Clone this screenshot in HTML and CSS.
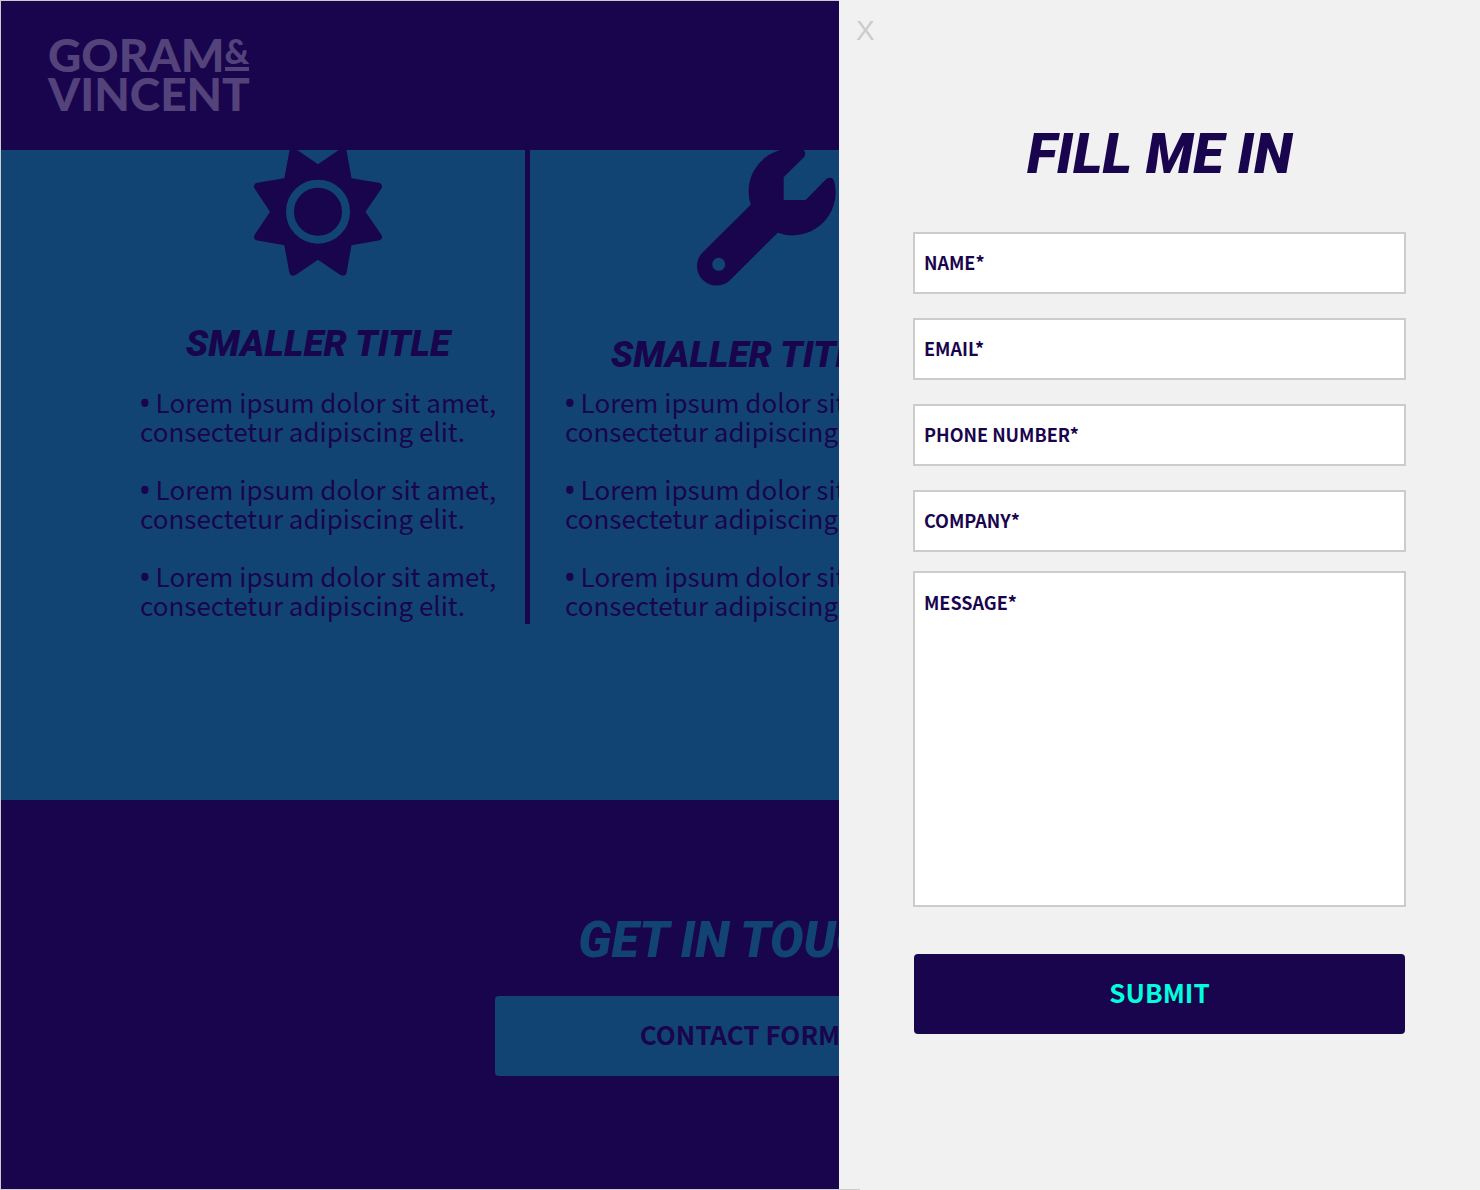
FILE: index.html
```html
<!DOCTYPE html>
<html lang="en">
<head>
  <meta charset="utf-8">
  <meta name="viewport" content="width=device-width, initial-scale=1">
  <title>Goram &amp; Vincent</title>
  <link rel="stylesheet" href="styles.css">
</head>
<body>
  <div class="page">
    <header class="header">
      <a class="logo" href="#">
        <span class="logo-line">GORAM<span class="logo-amp">&amp;</span></span>
        <span class="logo-line">VINCENT</span>
      </a>
    </header>

    <section class="features">
      <div class="feature-grid">
        <article class="feature">
          <svg class="icon" width="128" height="126" viewBox="0 0 128 126" aria-hidden="true">
            <path d="M64 14.3 42-.8Q36.500-4.500 35.300 1.500L30.300 28.300 3.300 32.800Q-1.500 34.300.700 38.700L16 61.700.700 84.700Q-1.500 89.200 3.300 90.600L30.300 95.300 35.300 122.300Q36.500 127.600 42 124.700L64 109.700 86 124.700Q91.500 127.600 92.700 122.300L97.500 95.300 124.700 90.600Q129.500 89.200 127.300 84.700L111.500 61.700 127.300 38.700Q129.500 34.300 124.700 32.800L97.500 28.300 92.700 1.500Q91.500-4.500 86-.8Z"/>
            <circle class="icon-ring" cx="64" cy="61.700" r="28"/>
          </svg>
          <h2 class="title title-small">Smaller Title</h2>
          <ul class="points">
            <li><span class="bullet">•</span> Lorem ipsum dolor sit amet, consectetur adipiscing elit.</li>
            <li><span class="bullet">•</span> Lorem ipsum dolor sit amet, consectetur adipiscing elit.</li>
            <li><span class="bullet">•</span> Lorem ipsum dolor sit amet, consectetur adipiscing elit.</li>
          </ul>
        </article>
        <div class="divider"></div>
        <article class="feature">
          <svg class="icon icon-wrench" width="186" height="137" viewBox="-47 0 186 137" aria-hidden="true">
            <path fill-rule="evenodd" d="M83 0A43 43 0 0 0 53.700 54.700L6 102A19.200 19.200 0 0 0 33 130.200L80.700 82.700A43 43 0 0 0 137.300 31.700Q135.500 25.500 129 29.300L108.700 50H86.700V27.300L107.300 6.700Q109.500 3.500 106.700 0ZM28.200 114.300A6.500 6.500 0 1 1 15.200 114.300A6.500 6.500 0 1 1 28.200 114.300Z"/>
          </svg>
          <h2 class="title title-small">Smaller Title</h2>
          <ul class="points">
            <li><span class="bullet">•</span> Lorem ipsum dolor sit amet, consectetur adipiscing elit.</li>
            <li><span class="bullet">•</span> Lorem ipsum dolor sit amet, consectetur adipiscing elit.</li>
            <li><span class="bullet">•</span> Lorem ipsum dolor sit amet, consectetur adipiscing elit.</li>
          </ul>
        </article>
      </div>
    </section>

    <section class="contact">
      <h2 class="title title-touch">Get in Touch</h2>
      <button class="button button-contact" type="button">CONTACT FORM</button>
    </section>
  </div>

  <aside class="drawer">
    <button class="close" type="button" aria-label="Close">X</button>
    <h1 class="title title-drawer">Fill Me In</h1>
    <form class="form">
      <input class="field" type="text" aria-label="Name" placeholder="NAME*" required>
      <input class="field" type="email" aria-label="Email" placeholder="EMAIL*" required>
      <input class="field" type="tel" aria-label="Phone number" placeholder="PHONE NUMBER*" required>
      <input class="field" type="text" aria-label="Company" placeholder="COMPANY*" required>
      <textarea class="field field-message" aria-label="Message" placeholder="MESSAGE*" required></textarea>
      <button class="button button-submit" type="submit">SUBMIT</button>
    </form>
  </aside>
</body>
</html>
```
FILE: styles.css
```css
:root {
  --navy: #19054d;
  --blue: #124473;
  --line: #cccccc;
  --paper: #f1f1f1;
  --mint: #00ffdd;
}

* {
  box-sizing: border-box;
}

body {
  margin: 0;
  position: relative;
  min-height: 100vh;
  overflow-x: hidden;
  color: var(--navy);
  font-family: "Noto Sans CJK SC", "Noto Sans", sans-serif;
}

h1, h2, ul {
  margin: 0;
  padding: 0;
}

.page {
  display: flex;
  flex-direction: column;
  min-height: 100vh;
  border: 1px solid var(--line);
  background: var(--navy);
}

.header {
  height: 149px;
  padding: 34px 47px;
}

.logo {
  display: inline-flex;
  flex-direction: column;
  color: #53437a;
  font-family: Lato, sans-serif;
  font-size: 46px;
  font-weight: 900;
  line-height: 39px;
  text-decoration: none;
}

.logo-line {
  display: flex;
  align-items: flex-start;
}

.logo-amp {
  height: 36px;
  border-bottom: 4px solid;
  font-size: 34px;
  line-height: 32px;
}

.features {
  height: 650px;
  background: var(--blue);
}

.feature-grid {
  display: grid;
  grid-template-columns: minmax(0, 1fr) 5px minmax(0, 1fr) 5px minmax(0, 1fr);
  max-width: 1270px;
  margin: 0 auto;
}

.feature {
  display: flex;
  flex-direction: column;
  align-items: center;
  height: 474px;
  padding: 0 29px 0 35px;
}

.divider {
  background: var(--navy);
}

.icon {
  flex: none;
  fill: var(--navy);
}

.icon-ring {
  stroke: var(--blue);
  stroke-width: 8px;
}

.title {
  font-family: Roboto, Lato, sans-serif;
  font-style: italic;
  font-weight: 900;
  text-transform: uppercase;
  white-space: nowrap;
}

.title-small {
  margin: 48px 0 23px;
  font-size: 37px;
  line-height: 40px;
}

.icon-wrench + .title-small {
  margin-bottom: 12px;
}

.points {
  display: flex;
  flex-direction: column;
  align-self: flex-start;
  gap: 29px;
  width: 366px;
  list-style: none;
  font-size: 26px;
  font-weight: 400;
  line-height: 29px;
}

.bullet {
  font-family: "Open Sans", sans-serif;
  font-weight: 700;
  line-height: 0;
}

.contact {
  display: flex;
  flex: 1;
  flex-direction: column;
  align-items: center;
  padding: 108px 24px;
}

.title-touch {
  color: var(--blue);
  font-size: 50px;
  line-height: 64px;
}

.button {
  height: 80px;
  padding: 0 0 5px;
  border: 0;
  border-radius: 4px;
  font: inherit;
  font-size: 26px;
  font-weight: 700;
}

.button-contact {
  width: 490px;
  max-width: 100%;
  margin-top: 24px;
  background: var(--blue);
  color: var(--navy);
}

.drawer {
  position: absolute;
  top: 0;
  right: 0;
  width: 641px;
  max-width: 100%;
  min-height: 100%;
  padding: 122px 74px 74px;
  background: linear-gradient(var(--line), var(--line)) left bottom / 21px 1px no-repeat var(--paper);
}

.close {
  position: absolute;
  top: 15px;
  left: 17px;
  padding: 0;
  border: 0;
  background: none;
  color: var(--line);
  font-family: "Liberation Sans", Arial, sans-serif;
  font-size: 28px;
  line-height: 32px;
}

.title-drawer {
  font-size: 56px;
  line-height: 64px;
  text-align: center;
}

.form {
  display: flex;
  flex-direction: column;
  gap: 24px;
  margin-top: 46px;
}

.field {
  display: block;
  width: 100%;
  height: 62px;
  padding: 0 9px 2px;
  border: 2px solid var(--line);
  border-radius: 0;
  background: #ffffff;
  color: var(--navy);
  font: inherit;
  font-size: 18px;
  font-weight: 700;
}

.field::placeholder {
  color: var(--navy);
  opacity: 1;
}

.field-message {
  height: 336px;
  margin-top: -5px;
  padding-top: 16px;
  resize: none;
}

.button-submit {
  margin: 23px 1px 0;
  background: var(--navy);
  color: var(--mint);
}
```
